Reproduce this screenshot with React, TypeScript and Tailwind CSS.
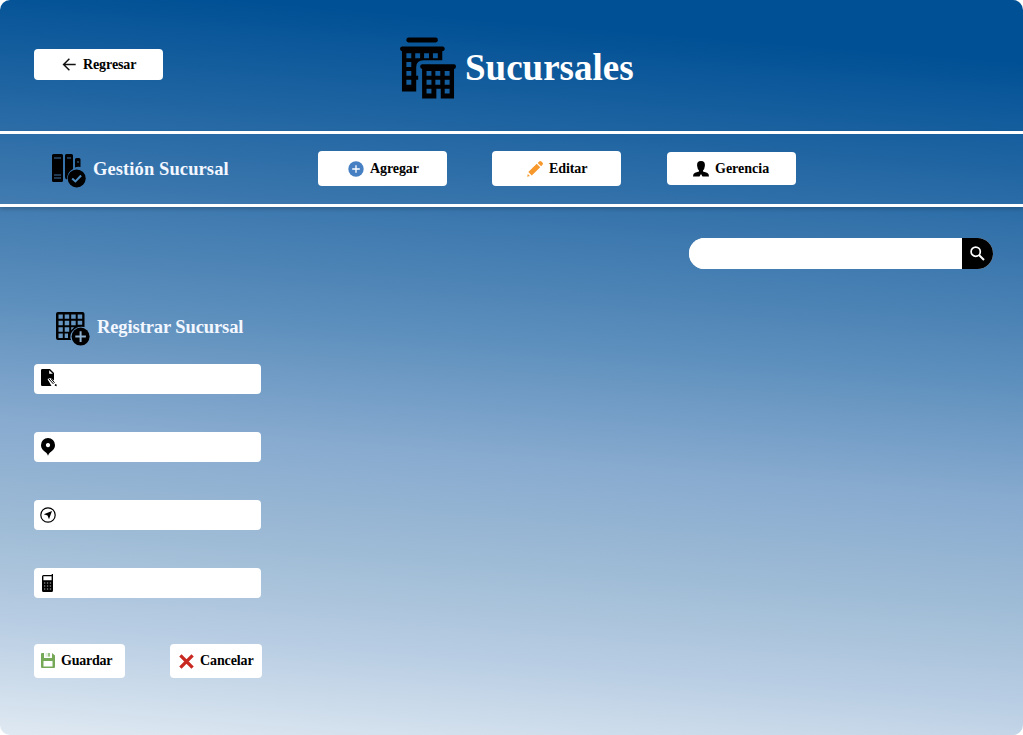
import React from "react";

type IconProps = { className?: string };

const BuildingsIcon = ({ className }: IconProps) => (
  <svg className={className} viewBox="0 0 57 62" fill="#000">
    <rect x="6.500" y="0" width="32" height="5" rx="2.200" />
    <path fillRule="evenodd" d="M2 9h41.500a2.500 2.500 0 0 1 1 4.500l-1.500.5v9H24q-7.500 0-7.500 7v9h2v4h-2v12H2V14q-2-.5-2-2.500T2 9zM6.500 16h5v5h-5zM15.500 16h5v5h-5zM24.500 16h5v5h-5zM33.500 16h5v5h-5zM6.500 25h5v5h-5zM6.500 34h5v5h-5zM6.500 43h5v5h-5z" />
    <path fillRule="evenodd" d="M22.500 27.300h32.500q2 0 2 2.300t-2 2.400v30H41.500V52h-4.500v10H22.500V32q-2-.5-2-2.400t2-2.300zM27 34h5v5h-5zM36 34h5v5h-5zM45.500 34h5v5h-5zM27 43h5v5h-5zM36 43h5v5h-5zM45.500 43h5v5h-5zM27 52h5v5h-5zM45.500 52h5v5h-5z" />
  </svg>
);

const BindersIcon = ({ className }: IconProps) => (
  <svg className={className} viewBox="0 0 34 34">
    <path d="M1.500 0H9.500Q11 0 11 1.500V26.500Q11 28 9.500 28H1.500Q0 28 0 26.500V1.500Q0 0 1.500 0zM14.500 0H19.500Q21 0 21 1.500V15Q15 18 15 25.500Q13 25 13 23V1.500Q13 0 14.500 0zM24.500 4H27Q28.500 4 28.500 5.500V13Q25 12.500 23 13.500V5.500Q23 4 24.500 4z" fill="#000" />
    <path d="M2 4h7M2 21h7M2 24h7M15 4h4M25 8h2" stroke="#4380b4" strokeWidth=".9" />
    <circle cx="24.700" cy="24.400" r="9" fill="#000" />
    <path d="m20.200 24.400 3.200 3 5.700-5.900" fill="none" stroke="#4d8cc0" strokeWidth="2.100" />
  </svg>
);

const GridPlusIcon = ({ className }: IconProps) => (
  <svg className={className} viewBox="0 0 34 34">
    <path fillRule="evenodd" d="M2 0H26.500Q28.500 0 28.500 2V15Q21 13.500 17 18.500Q13 23 15 28H2Q0 28 0 26V2Q0 0 2 0zM2.500 2.500v4.300h4.300V2.500zM8.700 2.500v4.300h4.500V2.500zM15.200 2.500v4.300h4.500V2.500zM21.700 2.500v4.300h4.500V2.500zM2.500 8.800v4.500h4.300V8.800zM8.700 8.800v4.500h4.500V8.800zM15.200 8.800v4.500h4.500V8.800zM21.700 8.800v4h4.500v-4zM2.500 15.200v4.500h4.300v-4.500zM8.700 15.200v4.500h4.500v-4.500zM15.200 15.200v3l3-3zM2.500 21.600v4.300h4.300v-4.300zM8.700 21.600v4.300H12v-4.300z" fill="#000" />
    <circle cx="24.600" cy="24.600" r="9" fill="#000" />
    <path d="M24.600 19.300v10.600M19.300 24.600h10.600" stroke="#8db1d2" strokeWidth="2" />
  </svg>
);

const ArrowIcon = ({ className }: IconProps) => (
  <svg className={className} viewBox="0 0 14 14" fill="none" stroke="#111" strokeWidth="1.500">
    <path d="M13.700 6.500H1.900M7.400.8 1.600 6.500 7.400 12.200" />
  </svg>
);

const PlusIcon = ({ className }: IconProps) => (
  <svg className={className} viewBox="0 0 16 16">
    <circle cx="8" cy="8" r="7.700" fill="#4680c2" />
    <path d="M8 4.200v7.600M4.200 8h7.600" stroke="#fff" strokeWidth="1.300" />
  </svg>
);

const PencilIcon = ({ className }: IconProps) => (
  <svg className={className} viewBox="0 0 16 16" fill="#f7982c">
    <path d="m9.700 2.800 3.500 3.500-8.400 8.200-3.500-3.400zM10.700 1.900l1.500-1.500q1-.9 2.200.2l1 .9q1.100 1.200.1 2.300L14.200 5.300zM.8 12.900 2.900 15 .2 15.800z" />
  </svg>
);

const PersonIcon = ({ className }: IconProps) => (
  <svg className={className} viewBox="0 0 16 16" fill="#000">
    <path d="M8 0c3 0 4.200 2 3.900 4.800Q11.600 8 10 9.500v1l4 1.300Q16 12.500 16 15.600H9.500L8 13 6.500 15.600H0Q0 12.500 2 11.800l4-1.300v-1Q4.400 8 4.100 4.800C3.800 2 5 0 8 0z" />
  </svg>
);

const SearchIcon = ({ className }: IconProps) => (
  <svg className={className} viewBox="0 0 15 15" fill="none" stroke="#fff" strokeWidth="1.700">
    <circle cx="5.700" cy="5.700" r="4.600" />
    <path d="m9 9 5 5" strokeWidth="2" />
  </svg>
);

const FileIcon = ({ className }: IconProps) => (
  <svg className={className} viewBox="0 0 16 18" fill="#000">
    <path fillRule="evenodd" d="M1.200 0H9l4 4v7.500L9.500 9 6.500 10 10.500 17H1.200Q0 17 0 15.800V1.200Q0 0 1.200 0zM8.200 1.200v3.600h3.600z" />
    <path d="m8 10 4.500 5M10 9.700l3.600 4.100" stroke="#000" strokeWidth="1" />
    <path d="m7.700 11.500 3.700 4.100" stroke="#fff" strokeWidth=".8" />
    <path d="m14 15.200 1.300-.3.500 2.400-2.100-.5z" />
  </svg>
);

const PinIcon = ({ className }: IconProps) => (
  <svg className={className} viewBox="0 0 14 18">
    <path fillRule="evenodd" fill="#000" d="M7 0a7 7 0 0 1 7 7c0 4-3 6-5 7.500Q7.500 16 7 17.800 6.500 16 5 14.500C3 13 0 11 0 7a7 7 0 0 1 7-7zm0 5a2.100 2.100 0 1 0 .01 0z" />
  </svg>
);

const CompassIcon = ({ className }: IconProps) => (
  <svg className={className} viewBox="0 0 16 16">
    <circle cx="8" cy="8" r="7.200" fill="none" stroke="#000" strokeWidth="1.200" />
    <path d="M12 4 9 12.300 7.500 8.600 3.800 7.200z" fill="#000" />
  </svg>
);

const PhoneIcon = ({ className }: IconProps) => (
  <svg className={className} viewBox="0 0 11 18">
    <path fillRule="evenodd" fill="#000" d="M9.700 0H11v16.500q0 1.500-1.500 1.500h-8Q0 18 0 16.500v-14Q0 1 1.500 1h8.200zM1.400 2.300v3.900h8.200V2.300z" />
    <path d="M2 9h7.500M2 12h7.500M2 15h7.500" stroke="#ccc" strokeWidth=".9" strokeDasharray="1.300 1.600" />
  </svg>
);

const SaveIcon = ({ className }: IconProps) => (
  <svg className={className} viewBox="0 0 14 15">
    <path fillRule="evenodd" fill="#75a957" d="M1 0h2v5h8V0l3 2.500V14q0 1-1 1H1q-1 0-1-1V1q0-1 1-1zM2.500 8v5.500h9V8z" />
    <path d="M4.500 0H9v3.700H4.500z" fill="#e2eddb" />
    <path d="M8 0v3.500" stroke="#75a957" strokeWidth="1.300" />
  </svg>
);

const CrossIcon = ({ className }: IconProps) => (
  <svg className={className} viewBox="0 0 14 14" stroke="#c7281f" strokeWidth="3.100" strokeLinejoin="round">
    <path d="m1.300 1.300 11.400 11.400M12.700 1.300 1.300 12.700" />
  </svg>
);

const button = "flex items-center rounded bg-white text-[14px] leading-none tracking-[-0.1px] text-black";
const field = "flex h-[30px] w-[227px] items-center rounded bg-white";

export default function App() {
  return (
    <div className="h-[735px] w-[1023px] bg-white font-['Liberation_Serif',serif] font-bold">
      <div className="flex h-full flex-col overflow-hidden rounded-[10px] bg-[linear-gradient(184.5deg,#005095_7.5%,#3a76ad_31.5%,#5b8ebc_46%,#87aacf_61%,#9fbcd6_74.5%,#b8cde3_86%,#dfe9f2_100%)]">
        <header className="flex h-[131px] items-start pl-[34px]">
          <button className={`${button} mt-[49px] h-[31px] w-[129px] pl-[28px]`}>
            <ArrowIcon className="mr-[7px] size-[14px]" />Regresar
          </button>
          <div className="ml-[237px] mt-[37px] flex items-center text-white">
            <BuildingsIcon className="h-[62px] w-[56px]" />
            <h1 className="mb-[2px] ml-[9px] text-[37px] leading-none">Sucursales</h1>
          </div>
        </header>
        <nav className="flex h-[76px] items-start border-y-[3px] border-white pl-[52px] shadow-[0_2px_4px_rgba(0,0,0,0.2)]">
          <BindersIcon className="mt-[20px] size-[34px]" />
          <h2 className="ml-[7px] mt-[25px] w-[225px] text-[18.5px] leading-[20px] tracking-[0.1px] text-[#f3f7ff]">Gestión Sucursal</h2>
          <button className={`${button} mt-[17px] h-[35px] w-[129px] pl-[30px]`}>
            <PlusIcon className="mr-[6px] size-[16px]" />Agregar
          </button>
          <button className={`${button} ml-[45px] mt-[17px] h-[35px] w-[129px] pl-[35px]`}>
            <PencilIcon className="mr-[6px] size-[16px]" />Editar
          </button>
          <button className={`${button} ml-[46px] mt-[18px] h-[33px] w-[129px] pl-[26px]`}>
            <PersonIcon className="mr-[6px] size-[16px]" /><span className="tracking-normal">Gerencia</span>
          </button>
        </nav>
        <main className="flex flex-col">
          <form className="ml-[689px] mt-[31px] flex h-[31px] w-[304px] overflow-hidden rounded-full bg-white">
            <input aria-label="Buscar" className="w-[273px] bg-white px-4 outline-none" />
            <button type="button" aria-label="Buscar" className="flex w-[31px] items-center bg-black pl-[8px]">
              <SearchIcon className="size-[15px]" />
            </button>
          </form>
          <section className="mt-[43px] flex flex-col pl-[34px]">
            <div className="flex h-[52px] items-start pl-[22px]">
              <GridPlusIcon className="size-[34px]" />
              <h2 className="ml-[7px] mt-[5px] text-[18.5px] leading-[20px] tracking-[-0.1px] text-[#f3f7ff]">Registrar Sucursal</h2>
            </div>
            <div className="flex flex-col gap-[38px]">
              <div className={`${field} pl-[7px]`}><FileIcon className="mb-[3px] h-[18px] w-[16px]" /></div>
              <div className={`${field} pl-[7px]`}><PinIcon className="h-[18px] w-[14px]" /></div>
              <div className={`${field} pl-[6px]`}><CompassIcon className="size-[16px]" /></div>
              <div className={`${field} pl-[8px]`}><PhoneIcon className="mb-px h-[18px] w-[11px]" /></div>
            </div>
            <div className="mt-[46px] flex gap-[45px]">
              <button className={`${button} h-[34px] w-[91px] pb-px pl-[7px]`}>
                <SaveIcon className="mr-[6px] h-[15px] w-[14px]" /><span className="tracking-[-0.25px]">Guardar</span>
              </button>
              <button className={`${button} h-[34px] w-[92px] pl-[9px]`}>
                <CrossIcon className="mr-[6px] size-[15px]" />Cancelar
              </button>
            </div>
          </section>
        </main>
      </div>
    </div>
  );
}
